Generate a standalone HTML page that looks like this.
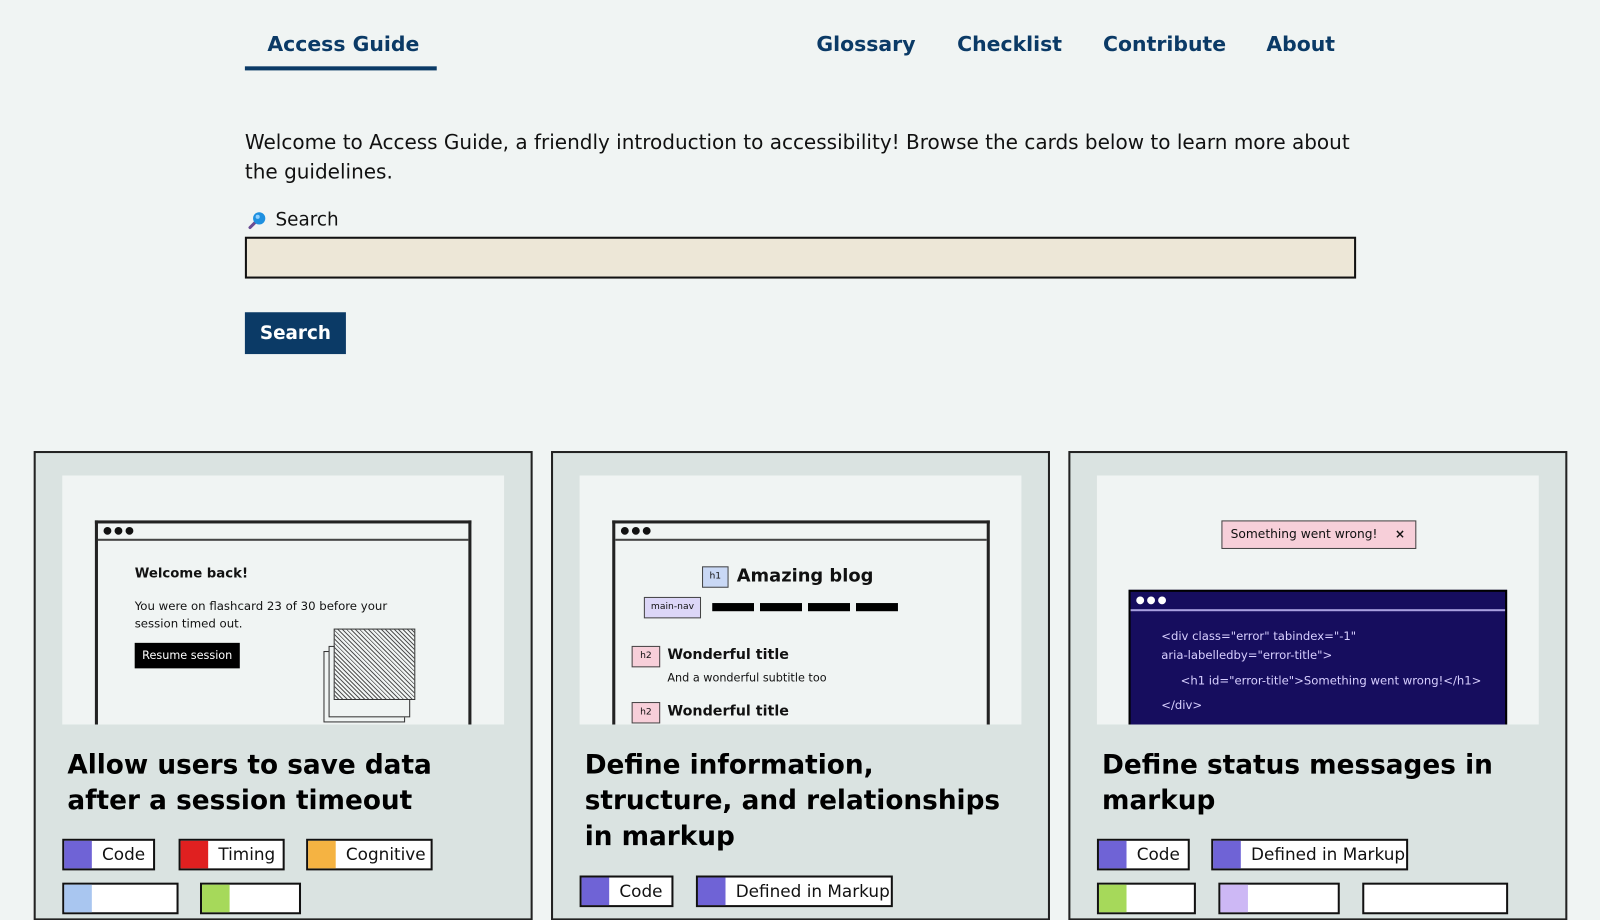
<!DOCTYPE html>
<html><head><meta charset="utf-8"><style>
*{box-sizing:border-box;margin:0;padding:0}
body{width:1600px;height:889px;overflow:hidden;background:#f0f4f3;font-family:"DejaVu Sans","Liberation Sans",sans-serif;color:#111;position:relative}
#w{position:absolute;left:0;top:0;width:1568px;height:900px;transform:scale(1.0204);transform-origin:0 0}
.a{position:absolute;white-space:nowrap}
.nav{font-size:20px;font-weight:bold;color:#0b3a66;top:31px}
.card{position:absolute;top:442px;width:489px;height:460px;border:2px solid #222;background:#dae3e1}
.img{position:absolute;left:26px;top:22px;width:433px;height:244px;background:#f0f4f3;overflow:hidden}
.title{position:absolute;left:31px;top:289px;font-size:25.8px;font-weight:bold;line-height:35px;white-space:nowrap;color:#000}
.tag{position:absolute;height:31px;border:2px solid #111;background:#fff;font-size:16.5px;line-height:27px;padding-left:37px;white-space:nowrap}
.tag i{position:absolute;left:0;top:0;width:27px;height:27px}
.br{position:absolute;border:3px solid #222;border-bottom:none;background:#f0f4f3}
.br .bar{height:17px;border-bottom:2px solid #444;position:relative}
.dots{position:absolute;left:5px;top:3px;font-size:10px;letter-spacing:2px;line-height:10px}
.lab{position:absolute;font-size:9px;text-align:center;border:1.5px solid #444}
</style></head><body><div id="w">
<div class="a nav" style="left:262px">Access Guide</div>
<div class="a" style="left:240px;top:65px;width:188px;height:4px;background:#0b3a66"></div>
<div class="a nav" style="left:800px">Glossary</div>
<div class="a nav" style="left:938px">Checklist</div>
<div class="a nav" style="left:1081px">Contribute</div>
<div class="a nav" style="left:1241px">About</div>

<div class="a" style="left:240px;top:125px;font-size:19.6px;line-height:29px">Welcome to Access Guide, a friendly introduction to accessibility! Browse the cards below to learn more about<br>the guidelines.</div>
<svg class="a" style="left:242px;top:206px" width="20" height="20" viewBox="0 0 20 20"><line x1="3" y1="17" x2="9" y2="11" stroke="#6a4c93" stroke-width="3" stroke-linecap="round"/><circle cx="12" cy="8" r="6" fill="#1e90e0"/><circle cx="10.5" cy="6.5" r="2" fill="#8fd0ff"/></svg>
<div class="a" style="left:270px;top:205px;font-size:18px">Search</div>
<div class="a" style="left:240px;top:232px;width:1089px;height:41px;background:#ede7d7;border:2px solid #111"></div>
<div class="a" style="left:240px;top:306px;width:99px;height:41px;background:#0b3a66;color:#fff;font-weight:bold;font-size:18px;line-height:41px;text-align:center">Search</div>

<!-- card 1 -->
<div class="card" style="left:33px">
 <div class="img">
  <div class="br" style="left:32px;top:44px;width:369px;height:210px"><div class="bar"><span class="dots">●●●</span></div>
   <div class="a" style="left:36px;top:42px;font-size:13px;font-weight:bold">Welcome back!</div>
   <div class="a" style="left:36px;top:73px;font-size:11.5px;line-height:17px">You were on flashcard 23 of 30 before your<br>session timed out.</div>
   <div class="a" style="left:36px;top:117px;width:103px;height:25px;background:#000;color:#fff;font-size:11px;line-height:25px;text-align:center">Resume session</div>
   <div class="a" style="left:221px;top:125px;width:80px;height:70px;border:1.5px solid #333;background:#f0f4f3"></div>
   <div class="a" style="left:226px;top:120px;width:80px;height:70px;border:1.5px solid #333;background:#f0f4f3"></div>
   <div class="a" style="left:231px;top:103px;width:80px;height:70px;border:1.5px solid #333;background:repeating-linear-gradient(45deg,#f0f4f3 0 2px,#555 2px 3px)"></div>
  </div>
 </div>
 <div class="title">Allow users to save data<br>after a session timeout</div>
 <div class="tag" style="left:26px;top:378px;width:91px"><i style="background:#6f63d6"></i>Code</div>
 <div class="tag" style="left:140px;top:378px;width:104px"><i style="background:#e02020"></i>Timing</div>
 <div class="tag" style="left:265px;top:378px;width:124px"><i style="background:#f5b342"></i>Cognitive</div>
 <div class="tag" style="left:26px;top:421px;width:114px"><i style="background:#a9c6f0"></i></div>
 <div class="tag" style="left:161px;top:421px;width:99px"><i style="background:#a6d95a"></i></div>
</div>

<!-- card 2 -->
<div class="card" style="left:540px">
 <div class="img">
  <div class="br" style="left:32px;top:44px;width:370px;height:210px"><div class="bar"><span class="dots">●●●</span></div>
   <div class="lab" style="left:85px;top:42px;width:26px;height:21px;line-height:18px;background:#c9d8f5">h1</div>
   <div class="a" style="left:119px;top:42px;font-size:17.5px;font-weight:bold">Amazing blog</div>
   <div class="lab" style="left:28px;top:72px;width:56px;height:21px;line-height:18px;background:#dcd6f7">main-nav</div>
   <div class="a" style="left:95px;top:78px;width:182px;height:8px;background:repeating-linear-gradient(90deg,#000 0 41px,transparent 41px 47px)"></div>
   <div class="lab" style="left:16px;top:120px;width:28px;height:21px;line-height:18px;background:#f7cfd9">h2</div>
   <div class="a" style="left:51px;top:121px;font-size:14px;font-weight:bold">Wonderful title</div>
   <div class="a" style="left:51px;top:145px;font-size:11px">And a wonderful subtitle too</div>
   <div class="lab" style="left:16px;top:175px;width:28px;height:21px;line-height:18px;background:#f7cfd9">h2</div>
   <div class="a" style="left:51px;top:176px;font-size:14px;font-weight:bold">Wonderful title</div>
  </div>
 </div>
 <div class="title">Define information,<br>structure, and relationships<br>in markup</div>
 <div class="tag" style="left:26px;top:414px;width:92px"><i style="background:#6f63d6"></i>Code</div>
 <div class="tag" style="left:140px;top:414px;width:193px"><i style="background:#6f63d6"></i>Defined in Markup</div>
</div>

<!-- card 3 -->
<div class="card" style="left:1047px">
 <div class="img">
  <div class="a" style="left:122px;top:44px;width:191px;height:28px;background:#f7cfd9;border:1.5px solid #444;font-size:12px;line-height:25px;padding-left:8px">Something went wrong!<span style="position:absolute;right:10px;font-weight:bold">×</span></div>
  <div class="a" style="left:31px;top:112px;width:371px;height:140px;background:#160d5e;border:2px solid #000;color:#d8d0ff;font-size:11.4px">
   <div style="height:19px;border-bottom:2px solid #a9a0e0;position:relative"><span class="dots" style="color:#fff;top:4px">●●●</span></div>
   <div class="a" style="left:30px;top:34px;line-height:19px">&lt;div class="error" tabindex="-1"<br>aria-labelledby="error-title"&gt;</div>
   <div class="a" style="left:49px;top:80px">&lt;h1 id="error-title"&gt;Something went wrong!&lt;/h1&gt;</div>
   <div class="a" style="left:30px;top:104px">&lt;/div&gt;</div>
  </div>
 </div>
 <div class="title">Define status messages in<br>markup</div>
 <div class="tag" style="left:26px;top:378px;width:91px"><i style="background:#6f63d6"></i>Code</div>
 <div class="tag" style="left:138px;top:378px;width:193px"><i style="background:#6f63d6"></i>Defined in Markup</div>
 <div class="tag" style="left:26px;top:421px;width:97px"><i style="background:#a6d95a"></i></div>
 <div class="tag" style="left:145px;top:421px;width:119px"><i style="background:#cdb8f5"></i></div>
 <div class="tag" style="left:286px;top:421px;width:143px;padding-left:0"></div>
</div>
</div></body></html>
